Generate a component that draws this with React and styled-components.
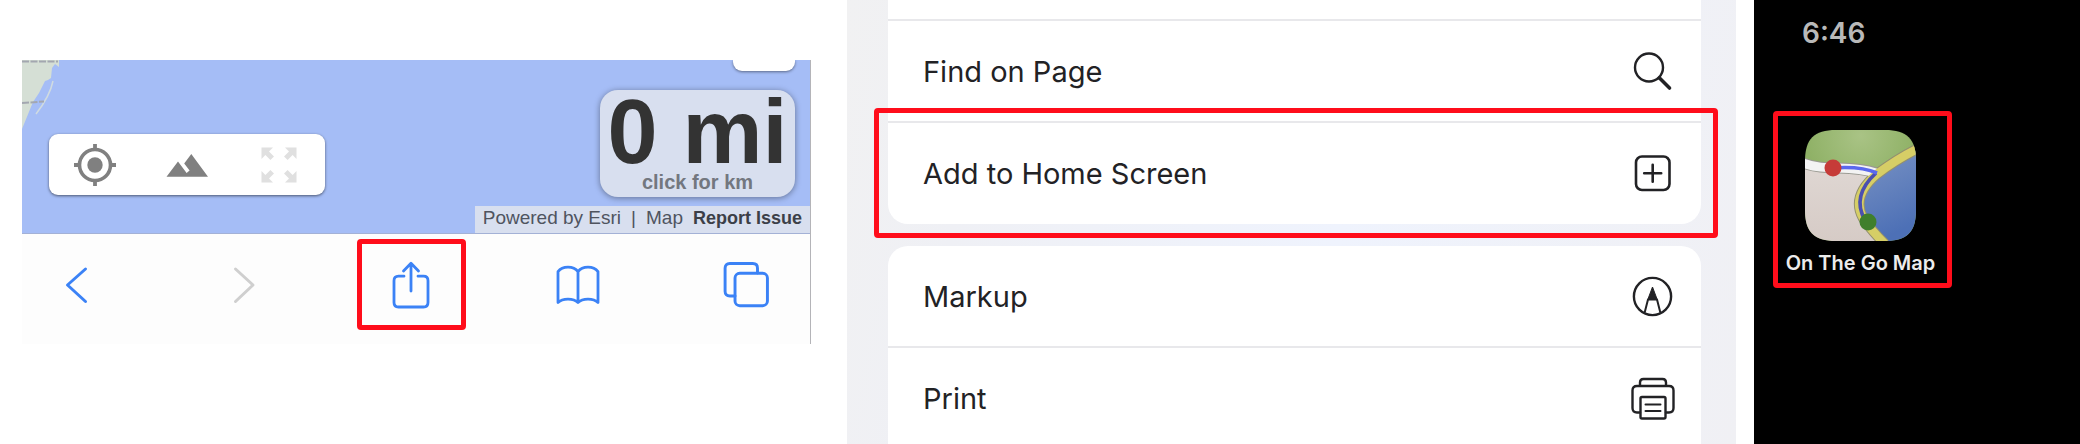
import React from "react";
import styled, { createGlobalStyle, css } from "styled-components";

const GlobalStyle = createGlobalStyle`
  * {
    box-sizing: border-box;
  }

  body {
    margin: 0;
    background: #ffffff;
    font-family: Inter, "Liberation Sans", sans-serif;
  }

  button {
    padding: 0;
    border: none;
    background: none;
    color: inherit;
    font: inherit;
    cursor: pointer;
  }

  a {
    color: inherit;
    text-decoration: none;
  }

  svg {
    display: block;
  }
`;

const highlight = css`
  border: 5px solid #ff0d1b;
  border-radius: 4px;
`;

const Page = styled.main`
  display: grid;
  grid-template-columns: 789fr 925fr 344fr;
  height: 100vh;
  padding-left: 22px;
  overflow: hidden;
`;

/* Browser */

const Browser = styled.section`
  align-self: start;
  margin-top: 60px;
  background: #fdfdfd;
  border-right: 1px solid #b4b4b8;
`;

const MapView = styled.div`
  position: relative;
  height: 174px;
  background: #a5bdf6;
  border-bottom: 1px solid #a3b1d6;
  overflow: hidden;
  font-family: "Liberation Sans", Arial, sans-serif;
`;

const Coast = styled.svg`
  position: absolute;
  top: 0;
  left: 0;
`;

const MapTab = styled.div`
  position: absolute;
  top: 0;
  right: 15px;
  width: 62px;
  height: 11px;
  border-radius: 0 0 9px 9px;
  background: #ffffff;
  box-shadow: 0 1px 3px rgba(0, 0, 0, 0.45);
`;

const MapControls = styled.div`
  position: absolute;
  left: 27px;
  bottom: 38px;
  display: flex;
  height: 61px;
  border-radius: 9px;
  background: #ffffff;
  box-shadow: 0 1px 3px rgba(0, 0, 0, 0.55);
`;

const MapButton = styled.button`
  display: flex;
  align-items: center;
  justify-content: center;
  width: 92px;
  color: ${({ disabled }) => (disabled ? "#e0e0e0" : "#808080")};
`;

const Distance = styled.button`
  position: absolute;
  top: 30px;
  right: 15px;
  display: flex;
  flex-direction: column;
  align-items: center;
  width: 195px;
  height: 107px;
  border-radius: 18px;
  background: #d8dfef;
  box-shadow: 0 1px 6px rgba(0, 0, 0, 0.4);
  font-weight: bold;
`;

const DistanceValue = styled.span`
  font-size: 90px;
  line-height: 84px;
  color: #333333;
  white-space: nowrap;
`;

const DistanceHint = styled.span`
  font-size: 20px;
  line-height: 16px;
  color: #73777f;
`;

const Attribution = styled.div`
  position: absolute;
  right: 0;
  bottom: 0;
  display: flex;
  align-items: center;
  gap: 10px;
  height: 27px;
  padding: 0 8px 4px;
  background: #d8dfef;
  font-size: 19px;
  line-height: 24px;
  color: #4f545f;
  white-space: nowrap;
`;

const ReportLink = styled.a`
  font-size: 18px;
  font-weight: bold;
  color: #3c3f48;
`;

const BrowserBar = styled.nav`
  display: flex;
  justify-content: space-between;
  padding: 5px 10px 14px 0;
`;

const BarButton = styled.button`
  display: flex;
  align-items: center;
  justify-content: center;
  width: 109px;
  height: 91px;
  color: ${({ disabled }) => (disabled ? "#cfcfcf" : "#3b82f6")};
  ${({ $highlighted }) => $highlighted && highlight}
`;

/* Share sheet */

const Sheet = styled.section`
  margin-left: 36px;
  padding: 0 35px 0 41px;
  background: linear-gradient(
    100deg,
    #f1f1f2 0%,
    #eff0f5 15%,
    #eff3fd 55%,
    #f0f0f4 100%
  );
  overflow: hidden;
`;

const ActionGroup = styled.ul`
  margin: 0 0 22px;
  padding: ${({ $continued }) => ($continued ? "19px 0 1px" : "0")};
  list-style: none;
  background: #ffffff;
  border-radius: ${({ $continued }) =>
    $continued ? "0 0 20px 20px" : "20px 20px 0 0"};
`;

const ActionItem = styled.li`
  position: relative;
  border-top: ${({ $divided }) => ($divided ? "2px solid #e8e8eb" : "none")};

  ${({ $highlighted }) =>
    $highlighted &&
    css`
      &::after {
        content: "";
        position: absolute;
        inset: -15px -17px -15px -14px;
        pointer-events: none;
        ${highlight}
      }
    `}
`;

const ActionButton = styled.button`
  display: flex;
  align-items: center;
  justify-content: space-between;
  width: 100%;
  height: 100px;
  padding: 2px 26px 0 35px;
  font-size: 29px;
  line-height: 36px;
  color: #222225;
`;

/* Home screen */

const HomeScreen = styled.section`
  margin-left: 18px;
  padding: 15px 0 0 19px;
  background: #000000;
`;

const Clock = styled.time`
  display: block;
  padding-left: 29px;
  font-size: 28px;
  font-weight: 600;
  line-height: 36px;
  color: #b9b9b9;
`;

const AppLink = styled.a`
  display: flex;
  flex-direction: column;
  align-items: center;
  gap: 8px;
  width: 179px;
  margin-top: 60px;
  padding: 14px 4px 6px 0;
  font-size: 20px;
  font-weight: 600;
  line-height: 28px;
  color: #ececec;
  white-space: nowrap;
  ${highlight}
`;

const LineIcon = ({ size = 44, width = 2.4, children }) => (
  <svg
    width={size}
    height={size}
    viewBox="0 0 44 44"
    fill="none"
    stroke="currentColor"
    strokeWidth={width}
    strokeLinecap="round"
    strokeLinejoin="round"
    aria-hidden="true"
  >
    {children}
  </svg>
);

const LocateIcon = () => (
  <svg width="42" height="42" viewBox="0 0 42 42" aria-hidden="true">
    <circle cx="21" cy="21" r="15.5" fill="none" stroke="currentColor" strokeWidth="3.6" />
    <circle cx="21" cy="21" r="7.7" fill="currentColor" />
    <path
      d="M21 0v6M21 36v6M0 21h6M36 21h6"
      stroke="currentColor"
      strokeWidth="3.8"
    />
  </svg>
);

const TerrainIcon = () => (
  <svg width="42" height="42" viewBox="0 0 42 42" aria-hidden="true">
    <path
      d="M25.3 10 L18.2 19.4 L23.6 26.6 L20.6 28.9 L12 17.5 L0.5 32.7 H42 Z"
      fill="currentColor"
    />
  </svg>
);

const ExpandIcon = () => (
  <svg width="36" height="36" viewBox="0 0 36 36" aria-hidden="true">
    <g fill="currentColor">
      <path d="M0.5 0.5h11.5l-4 4 5 5-3.6 3.6-5-5-3.9 3.9z" />
      <path d="M35.5 0.5v11.5l-3.9-3.9-5 5-3.6-3.6 5-5-4-4z" />
      <path d="M0.5 35.5v-11.5l3.9 3.9 5-5 3.6 3.6-5 5 4 4z" />
      <path d="M35.5 35.5h-11.5l4-4-5-5 3.6-3.6 5 5 3.9-3.9z" />
    </g>
  </svg>
);

const BackIcon = () => (
  <LineIcon width={3}>
    <path d="M30.5 6 L12.5 22 L30.5 38.5" />
  </LineIcon>
);

const ForwardIcon = () => (
  <LineIcon width={3}>
    <path d="M13.5 6 L31 22 L13.5 38.5" />
  </LineIcon>
);

const ShareIcon = () => (
  <svg
    width="40"
    height="48"
    viewBox="0 0 40 48"
    fill="none"
    stroke="currentColor"
    strokeWidth="2.8"
    strokeLinecap="round"
    strokeLinejoin="round"
    aria-hidden="true"
  >
    <path d="M13 15.2H7.5Q3 15.2 3 19.7V41.5Q3 46 7.5 46H32.5Q37 46 37 41.5V19.7Q37 15.2 32.5 15.2H27" />
    <path d="M20 30V2.5M12.5 10 L20 2.3 L27.5 10" />
  </svg>
);

const BookIcon = () => (
  <LineIcon width={2.8}>
    <path d="M22 8.6C17.5 2.6 6.5 2.6 2 8.6V39.5C6.5 35 17.5 35 22 39.5C26.5 35 37.5 35 42 39.5V8.6C37.5 2.6 26.5 2.6 22 8.6V39.5" />
  </LineIcon>
);

const TabsIcon = () => (
  <LineIcon size={46} width={2.8}>
    <path d="M11.5 32.5H6.5Q2 32.5 2 28V6Q2 1.5 6.5 1.5H28.5Q33 1.5 33 6V10.5" />
    <rect x="11.5" y="10.8" width="31" height="31" rx="4.5" />
  </LineIcon>
);

const SearchIcon = () => (
  <LineIcon>
    <circle cx="18" cy="17.5" r="14" />
    <path d="M28.5 28 L38.5 38" strokeWidth="3.6" />
  </LineIcon>
);

const AddIcon = () => (
  <LineIcon width={2.6}>
    <rect x="5" y="4.5" width="33.5" height="33.5" rx="6" />
    <path d="M21.7 12.8V29.8M13.2 21.3H30.2" />
  </LineIcon>
);

const MarkupIcon = () => (
  <LineIcon>
    <circle cx="21.5" cy="21.5" r="18.6" />
    <path d="M13.8 37L17 24.5H26L29.2 37" strokeWidth="2" />
    <path d="M17 24L21.5 12L26 24Z" fill="currentColor" strokeWidth="1" />
  </LineIcon>
);

const PrintIcon = () => (
  <LineIcon>
    <path d="M9 35.5H6Q1.5 35.5 1.5 31V13.5Q1.5 9 6 9H38Q42.5 9 42.5 13.5V31Q42.5 35.5 38 35.5H35" />
    <path d="M9 8.5V5.5Q9 2 12.5 2H31.5Q35 2 35 5.5V8.5" />
    <rect x="9.5" y="20" width="25" height="21.5" rx="1.5" />
    <path d="M14.5 27.5H29.5M14.5 34H29.5" strokeWidth="2" />
  </LineIcon>
);

const AppIcon = () => (
  <svg width="111" height="111" viewBox="0 0 111 111" aria-hidden="true">
    <defs>
      <clipPath id="app-shape">
        <path d="M0 31C0 9 9 0 31 0H80C102 0 111 9 111 31V80C111 102 102 111 80 111H31C9 111 0 102 0 80Z" />
      </clipPath>
      <radialGradient id="park" cx="0.5" cy="0.05" r="0.5">
        <stop offset="0" stopColor="#a9c385" />
        <stop offset="1" stopColor="#8fb166" />
      </radialGradient>
      <linearGradient id="land" x1="0" y1="0" x2="0" y2="1">
        <stop offset="0" stopColor="#dfd7d3" />
        <stop offset="1" stopColor="#d6cbc6" />
      </linearGradient>
      <linearGradient id="water" x1="0" y1="0" x2="0.3" y2="1">
        <stop offset="0" stopColor="#7b94c4" />
        <stop offset="1" stopColor="#4d70b6" />
      </linearGradient>
    </defs>
    <g clipPath="url(#app-shape)" fill="none">
      <path d="M0 0H111V111H0Z" fill="url(#park)" />
      <path d="M0 34C22 42 44 33 70 43Q44 66 57 88Q64 99 78 112H0Z" fill="url(#land)" />
      <path d="M112 19Q92 29 72 44Q46 66 58 88Q65 99 80 112H112Z" fill="url(#water)" />
      <path d="M-2 33C22 42 42 34 73 43" stroke="#9a9a92" strokeWidth="11" />
      <path d="M112 19Q92 29 72 44Q46 66 58 88Q65 99 80 114" stroke="#93906f" strokeWidth="10.5" />
      <path d="M-2 33C22 42 42 34 71 43" stroke="#f3f3f3" strokeWidth="9" />
      <path d="M112 19Q92 29 72 44Q46 66 58 88Q65 99 80 114" stroke="#d6ce66" strokeWidth="8.5" />
      <path d="M71 43Q46 66 60 90" stroke="#4b4fb0" strokeWidth="3.6" />
      <path d="M28 38Q56 36 72 43" stroke="#5a68ee" strokeWidth="3.6" />
      <circle cx="28" cy="38" r="8.5" fill="#c63b38" />
      <circle cx="63" cy="92" r="8.5" fill="#3f7f2c" />
    </g>
  </svg>
);

const barItems = [
  { label: "Back", Icon: BackIcon },
  { label: "Forward", Icon: ForwardIcon, disabled: true },
  { label: "Share", Icon: ShareIcon, highlighted: true },
  { label: "Bookmarks", Icon: BookIcon },
  { label: "Tabs", Icon: TabsIcon },
];

const actionGroups = [
  {
    continued: true,
    actions: [
      { label: "Find on Page", Icon: SearchIcon },
      { label: "Add to Home Screen", Icon: AddIcon, highlighted: true },
    ],
  },
  {
    actions: [
      { label: "Markup", Icon: MarkupIcon },
      { label: "Print", Icon: PrintIcon },
    ],
  },
];

const App = () => {
  return (
    <>
      <GlobalStyle />
      <Page>
        <Browser>
          <MapView>
            <Coast width="40" height="72" viewBox="0 0 40 72" aria-hidden="true">
              <path
                d="M0 0H37V7L33 4L30 8L29 18L26 20L23 21L17 33L11 42L0 69Z"
                fill="#d5dfd5"
              />
              <path
                d="M31 21Q28 36 14 54"
                fill="none"
                stroke="#d0dbe0"
                strokeWidth="1.5"
              />
              <path
                d="M0 1.5H36M0 43L22 41.5"
                stroke="#a3a7b0"
                strokeWidth="2"
                strokeDasharray="7 1.5"
              />
            </Coast>
            <MapTab />
            <MapControls>
              <MapButton aria-label="My location">
                <LocateIcon />
              </MapButton>
              <MapButton aria-label="Terrain">
                <TerrainIcon />
              </MapButton>
              <MapButton aria-label="Full screen" disabled>
                <ExpandIcon />
              </MapButton>
            </MapControls>
            <Distance>
              <DistanceValue>0 mi</DistanceValue>
              <DistanceHint>click for km</DistanceHint>
            </Distance>
            <Attribution>
              <span>Powered by Esri</span>
              <span>|</span>
              <a href="#map">Map</a>
              <ReportLink href="#report">Report Issue</ReportLink>
            </Attribution>
          </MapView>
          <BrowserBar>
            {barItems.map(({ label, Icon, disabled, highlighted }) => (
              <BarButton
                key={label}
                aria-label={label}
                disabled={disabled}
                $highlighted={highlighted}
              >
                <Icon />
              </BarButton>
            ))}
          </BrowserBar>
        </Browser>
        <Sheet>
          {actionGroups.map(({ continued, actions }, group) => (
            <ActionGroup key={group} $continued={continued}>
              {actions.map(({ label, Icon, highlighted }, index) => (
                <ActionItem
                  key={label}
                  $divided={continued || index > 0}
                  $highlighted={highlighted}
                >
                  <ActionButton>
                    {label}
                    <Icon />
                  </ActionButton>
                </ActionItem>
              ))}
            </ActionGroup>
          ))}
        </Sheet>
        <HomeScreen>
          <Clock>6:46</Clock>
          <AppLink href="#app">
            <AppIcon />
            On The Go Map
          </AppLink>
        </HomeScreen>
      </Page>
    </>
  );
};

export default App;
